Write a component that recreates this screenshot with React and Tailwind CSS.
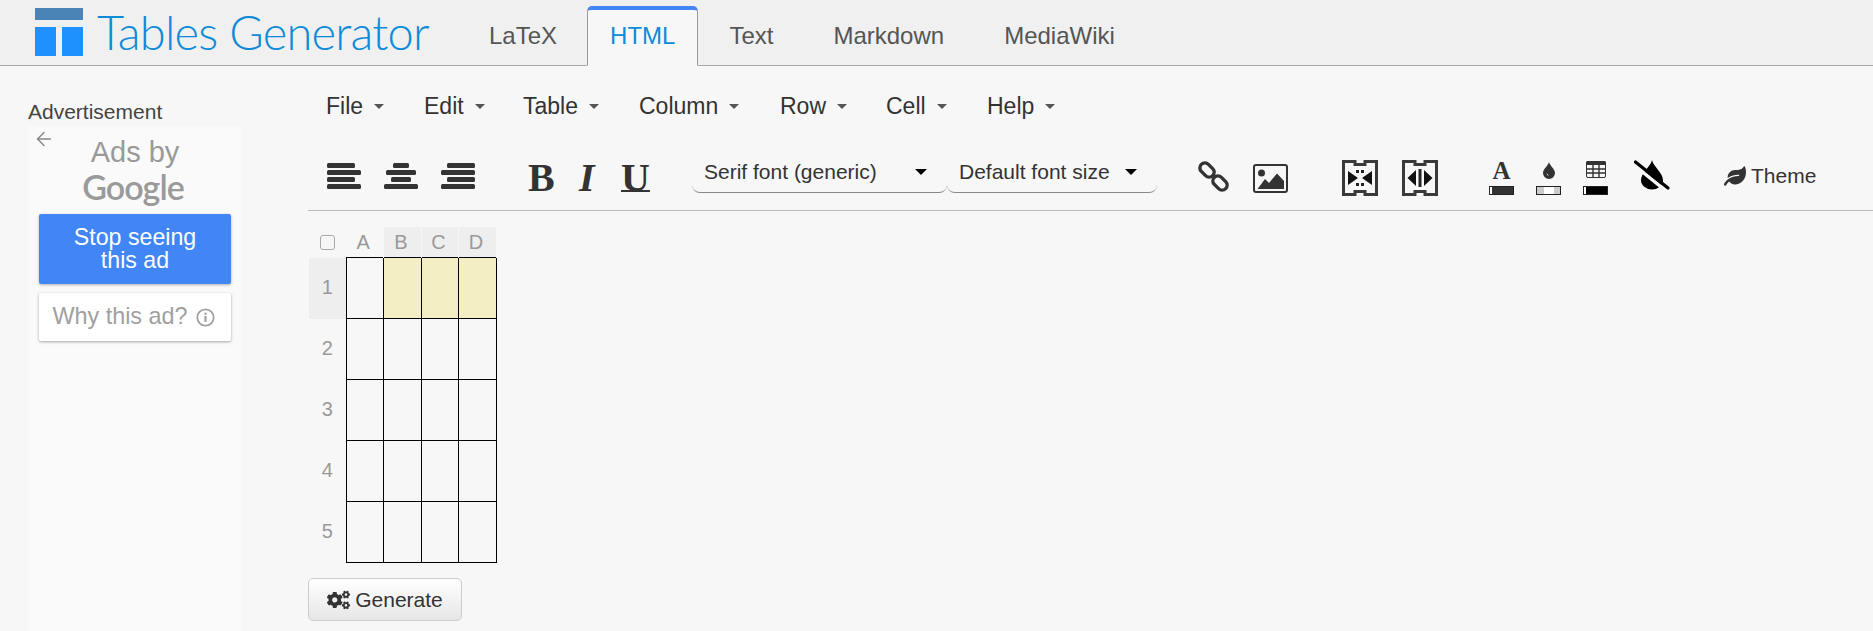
import React from "react";
import { ArrowLeft } from "lucide-react";
import { FaCogs, FaLeaf } from "react-icons/fa";

const SANS = "font-['Liberation_Sans',Arial,sans-serif]";

function Caret() {
  return <span className="ml-[11px] inline-block h-0 w-0 border-x-[5.5px] border-t-[5.5px] border-x-transparent border-t-[#555]" />;
}

function SelCaret() {
  return <span className="block h-0 w-0 border-x-[6px] border-t-[6px] border-x-transparent border-t-black" />;
}

function Align({ widths, justify }) {
  return (
    <svg width="34" height="26" viewBox="0 0 34 26" className="block">
      {widths.map((w, i) => {
        const x = justify === "l" ? 0 : justify === "r" ? 34 - w : (34 - w) / 2;
        return <rect key={i} x={x} y={i * 7} width={w} height="5" rx="1.5" fill="#333" />;
      })}
    </svg>
  );
}

function LinkIcon() {
  return (
    <svg width="32" height="32" viewBox="0 0 32 32" className="block">
      <g fill="none" stroke="#333" strokeWidth="3.4">
        <rect x="1" y="4" width="16" height="10" rx="5" transform="rotate(45 9 9)" />
        <rect x="14" y="17" width="16" height="10" rx="5" transform="rotate(45 22 22)" />
      </g>
    </svg>
  );
}

function ImageIcon() {
  return (
    <svg width="35" height="29" viewBox="0 0 35 29" className="block">
      <rect x="1" y="1" width="33" height="27" rx="2" fill="none" stroke="#333" strokeWidth="2" />
      <circle cx="8.5" cy="9" r="3.5" fill="#333" />
      <path d="M4.5 25 L12 15 L16 19 L24 9.5 L31 17 V25 Z" fill="#333" />
    </svg>
  );
}

function Frame({ children }) {
  return (
    <svg width="36" height="36" viewBox="0 0 36 36" className="block">
      <path d="M1.5 1.5 H13 V4.5 H23 V1.5 H34.5 V34.5 H23 V31.5 H13 V34.5 H1.5 Z" fill="none" stroke="#3a3a3a" strokeWidth="3" />
      {children}
    </svg>
  );
}

function MergeIcon() {
  return (
    <Frame>
      <path d="M6 11 L16 18 L6 25 Z M30 11 L20 18 L30 25 Z" fill="#111" />
      <rect x="14" y="10" width="3" height="3" fill="#222" />
      <rect x="19" y="10" width="3" height="3" fill="#222" />
      <rect x="14" y="23" width="3" height="3" fill="#222" />
      <rect x="19" y="23" width="3" height="3" fill="#222" />
    </Frame>
  );
}

function SplitIcon() {
  return (
    <Frame>
      <path d="M14 10 L5.5 18 L14 26 Z M22 10 L30.5 18 L22 26 Z" fill="#111" />
      <rect x="16.5" y="9" width="3" height="18" fill="#222" />
    </Frame>
  );
}

function Swatch({ className, children }) {
  return <div className={`relative mt-[6px] h-[9px] w-[25px] border border-[#222] ${className}`}>{children}</div>;
}

function ColorA() {
  return (
    <div className="flex w-[25px] flex-col items-center">
      <span className="h-[19px] font-['Liberation_Serif',serif] text-[25px] font-bold leading-[20px] text-[#333]">A</span>
      <Swatch className="bg-[#333]"><span className="absolute inset-y-0 left-0 w-[2px] bg-white" /></Swatch>
    </div>
  );
}

function Drop() {
  return (
    <svg width="12" height="17" viewBox="0 0 12 17" className="block">
      <path d="M6 0 C7 4 12 7 12 11 A6 6 0 0 1 0 11 C0 7 5 4 6 0 Z" fill="#333" />
      <path d="M3.5 11 A3 3 0 0 0 6 14 Z" fill="#f7f7f7" />
    </svg>
  );
}

function ColorDrop() {
  return (
    <div className="flex w-[25px] flex-col items-center">
      <div className="h-[19px] pt-[1px]"><Drop /></div>
      <Swatch className="bg-[linear-gradient(90deg,#ccc_0_30%,#fff_30%_75%,#ccc_75%)]" />
    </div>
  );
}

function ColorTable() {
  return (
    <div className="flex w-[25px] flex-col items-center">
      <svg width="20" height="19" viewBox="0 0 20 19" className="block">
        <rect x="0.5" y="0.5" width="19" height="16" rx="1.5" fill="none" stroke="#333" />
        <rect x="0" y="0" width="20" height="4" rx="1.5" fill="#333" />
        <path d="M7 4 V16 M13 4 V16 M1 8 H19 M1 12 H19" stroke="#333" strokeWidth="1.4" fill="none" />
      </svg>
      <Swatch className="bg-black"><span className="absolute inset-y-0 left-0 w-[2px] bg-white" /></Swatch>
    </div>
  );
}

function NoColor() {
  return (
    <svg width="36" height="30" viewBox="0 0 36 30" className="block">
      <path d="M18 0 C19 6 29 13 29 20 A11 9.5 0 0 1 7 20 C7 13 17 6 18 0 Z" fill="#000" />
      <path d="M0 5 L31 30" stroke="#f7f7f7" strokeWidth="3.5" />
      <path d="M1.5 2 L34 28" stroke="#000" strokeWidth="3.2" strokeLinecap="round" />
    </svg>
  );
}

function Select({ label, className, caretClass }) {
  return (
    <div className={`flex h-[43px] items-center rounded-b-[8px] border-b border-[#888] pt-[2px] text-[21px] text-[#333] ${className}`}>
      <span>{label}</span>
      <span className={caretClass}><SelCaret /></span>
    </div>
  );
}

function App() {
  const tabs = [
    ["LaTeX", "ml-[4px] mr-[3px]"],
    ["HTML", "mx-[4px]"],
    ["Text", "ml-[4px] mr-[10px]"],
    ["Markdown", "ml-[4px] mr-[10px]"],
    ["MediaWiki", "mx-[4px]"],
  ];
  const menus = [
    ["File", "w-[98px]"],
    ["Edit", "w-[99px]"],
    ["Table", "w-[116px]"],
    ["Column", "w-[141px]"],
    ["Row", "w-[106px]"],
    ["Cell", "w-[101px]"],
    ["Help", ""],
  ];
  const cols = ["A", "B", "C", "D"];
  const rows = [1, 2, 3, 4, 5];
  return (
    <div className={`h-[631px] w-full overflow-hidden bg-[#f7f7f7] ${SANS}`}>
      <header className="flex h-[66px] items-end border-b border-[#aaa] bg-[#f0f0f0]">
        <div className="mb-[9px] ml-[35px] flex h-[48px] w-[48px] flex-col justify-between">
          <div className="h-[12px] bg-[#4a83b5]" />
          <div className="flex h-[29px] justify-between">
            <div className="w-[21px] bg-[#1e90ff]" />
            <div className="w-[21px] bg-[#1e90ff]" />
          </div>
        </div>
        <div className="mb-[7px] ml-[14px] w-[365px] font-['Lato',sans-serif] text-[47px] font-light leading-[52px] tracking-[-0.8px] whitespace-nowrap text-[#0d8bd9]">
          Tables Generator
        </div>
        <nav className="-mb-px flex items-end">
          {tabs.map(([t, m]) => (
            <div
              key={t}
              className={
                t === "HTML"
                  ? `${m} flex h-[60px] items-center rounded-t-[5px] border-x border-b border-t-[4px] border-x-[#999] border-b-[#f7f7f7] border-t-[#4285f4] bg-[#f7f7f7] px-[22px] pb-[3px] text-[24px] text-[#0d8bd9]`
                  : `${m} flex h-[60px] items-center border-x border-transparent px-[22px] pb-[1px] text-[24px] text-[#555]`
              }
            >
              {t}
            </div>
          ))}
        </nav>
      </header>

      <div className="flex">
        <aside className="w-[308px] shrink-0 pl-[28px]">
          <div className="pt-[31px] text-[21px] leading-[29px] text-[#444]">Advertisement</div>
          <div className="h-[520px] w-[214px] bg-[#fafafa] px-[11px]">
            <div className="relative text-center">
              <ArrowLeft className="absolute -left-[6px] top-[2px] h-[22px] w-[22px] text-[#888]" strokeWidth={1.6} />
              <div className="pt-[8px] text-[29px] leading-[36px] text-[#999]">Ads by</div>
              <div className="h-[40px] pr-[4px] font-['Lato',sans-serif] text-[34px] font-semibold leading-[34px] tracking-[-1px] text-[#9a9a9a]">Google</div>
            </div>
            <div className="mt-[4px] flex h-[70px] items-center justify-center rounded-[2px] bg-[#4285f4] text-center text-[23.2px] leading-[23px] text-white shadow-[0_1px_3px_rgba(0,0,0,0.3)]">
              <span>Stop seeing<br />this ad</span>
            </div>
            <div className="mt-[9px] flex h-[48px] items-center justify-center gap-[8px] rounded-[2px] bg-white pr-[3px] text-[23.4px] text-[#a0a0a0] shadow-[0_1px_3px_rgba(0,0,0,0.35)]">
              <span>Why this ad?</span>
              <svg width="19" height="19" viewBox="0 0 19 19" className="block">
                <circle cx="9.5" cy="9.5" r="8.2" fill="none" stroke="#a0a0a0" strokeWidth="1.8" />
                <rect x="8.4" y="8" width="2.2" height="6" fill="#a0a0a0" />
                <rect x="8.4" y="4.6" width="2.2" height="2.2" fill="#a0a0a0" />
              </svg>
            </div>
          </div>
        </aside>

        <main className="min-w-0 flex-1">
          <div className="flex h-[74px] items-center pl-[18px] pt-[6px] text-[23px] text-[#333]">
            {menus.map(([m, w]) => (
              <div key={m} className={`flex items-center ${w}`}>
                <span>{m}</span>
                <Caret />
              </div>
            ))}
          </div>

          <div className="flex h-[71px] items-center border-b border-[#bbb] pl-[19px] pt-[6px]">
            <div className="mb-[4px] flex items-center">
              <Align widths={[28, 34, 28, 34]} justify="l" />
              <div className="ml-[23px]"><Align widths={[16, 30, 20, 34]} justify="c" /></div>
              <div className="ml-[23px]"><Align widths={[28, 34, 28, 34]} justify="r" /></div>
            </div>
            <div className="ml-[53px] flex items-center font-['Liberation_Serif',serif] text-[40px] leading-[40px] text-[#333]">
              <span className="w-[28px] font-bold">B</span>
              <span className="ml-[23px] w-[20px] font-bold italic">I</span>
              <span className="ml-[22px] mr-[1px] w-[29px] font-bold underline decoration-2 underline-offset-[-1px] [text-decoration-skip-ink:none]">U</span>
            </div>
            <div className="mb-[17px] ml-[41px] flex items-end self-end">
              <Select label="Serif font (generic)" className="w-[255px] pl-[12px]" caretClass="ml-[38px]" />
              <Select label="Default font size" className="w-[210px] pl-[12px]" caretClass="ml-[15px]" />
            </div>
            <div className="mb-[2px] ml-[41px]"><LinkIcon /></div>
            <div className="ml-[23px]"><ImageIcon /></div>
            <div className="ml-[54px]"><MergeIcon /></div>
            <div className="ml-[24px]"><SplitIcon /></div>
            <div className="ml-[51px]"><ColorA /></div>
            <div className="ml-[22px]"><ColorDrop /></div>
            <div className="ml-[22px]"><ColorTable /></div>
            <div className="mb-[6px] ml-[26px]"><NoColor /></div>
            <div className="mb-[4px] ml-[54px] flex items-center gap-[5px] text-[21px] text-[#333]">
              <FaLeaf className="h-[20px] w-[22px] text-[#333]" />
              <span>Theme</span>
            </div>
          </div>

          <div className="pl-[1px] pt-[16px]">
            <table className="table-fixed border-collapse text-[20px] text-[#999]">
              <thead>
                <tr className="h-[30px]">
                  <th className="w-[37px] p-0 font-normal">
                    <span className="mx-auto block h-[15px] w-[15px] rounded-[3px] border-[1.5px] border-[#aaa]" />
                  </th>
                  {cols.map((c, i) => (
                    <th key={c} className={`p-0 pr-[2px] font-normal ${i % 2 === 0 ? "w-[37px]" : "w-[38px]"} ${c === "A" ? "" : "border-x border-x-[#f7f7f7] bg-[#eee]"}`}>{c}</th>
                  ))}
                </tr>
              </thead>
              <tbody>
                {rows.map((r) => (
                  <tr key={r} className="h-[61px]">
                    <td className={`p-0 pb-[2px] text-center ${r === 1 ? "bg-[#eee]" : ""}`}>{r}</td>
                    {cols.map((c) => (
                      <td key={c} className={`border border-black p-0 ${r === 1 && c !== "A" ? "bg-[#f3eec4]" : ""}`} />
                    ))}
                  </tr>
                ))}
              </tbody>
            </table>
            <button className="-ml-px mt-[15px] flex h-[43px] w-[154px] items-center justify-center gap-[5px] rounded-[5px] border border-[#ccc] bg-[linear-gradient(#fff,#e6e6e6)] text-[21px] text-[#333]">
              <FaCogs className="h-[20px] w-[23px]" />
              <span>Generate</span>
            </button>
          </div>
        </main>
      </div>
    </div>
  );
}

export default App;
